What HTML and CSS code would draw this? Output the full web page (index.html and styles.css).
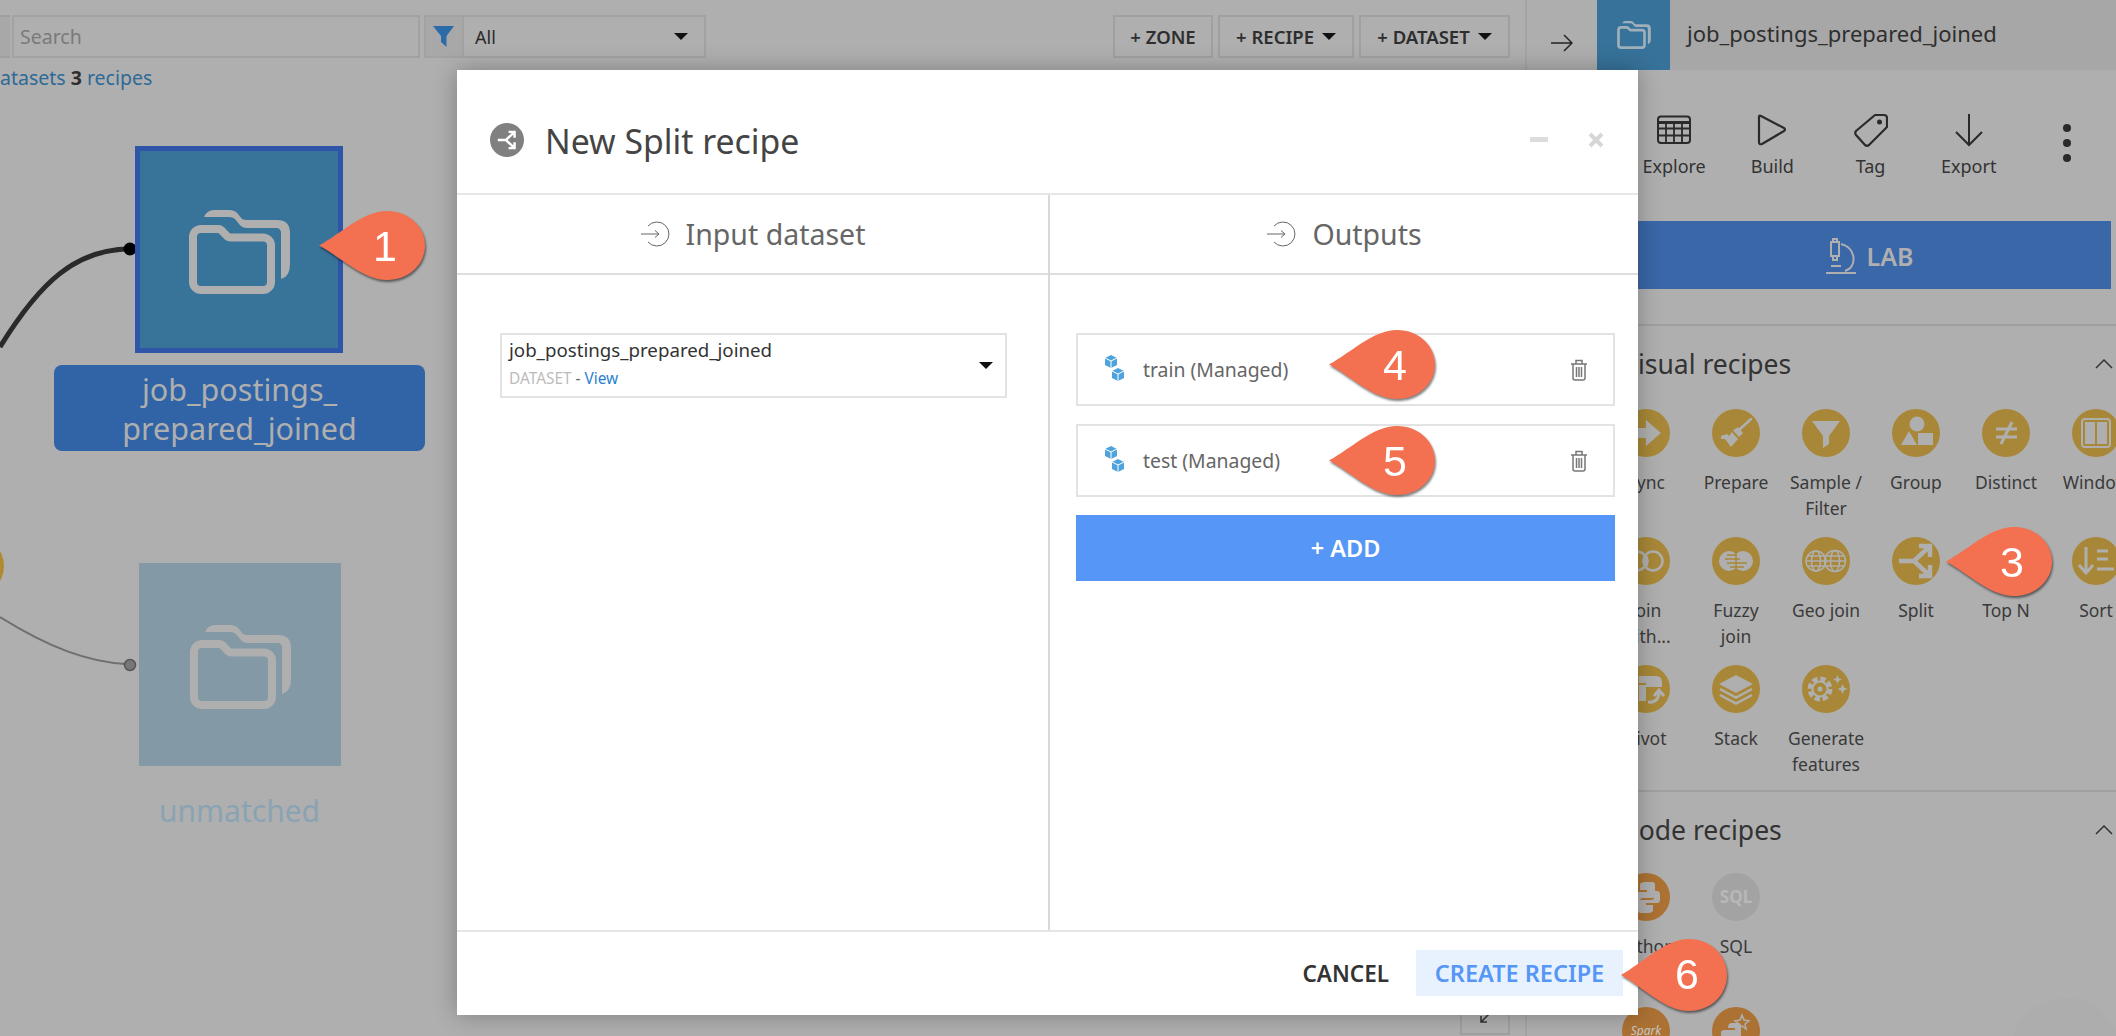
FILE: index.html
```html
<!DOCTYPE html>
<html lang="en">
<head>
<meta charset="UTF-8">
<title>New Split recipe</title>
<link rel="stylesheet" href="styles.css">
</head>
<body>
  <svg class="defs" width="0" height="0">
    <symbol id="folder" viewBox="0 0 101 84">
      <path fill="currentColor" d="M15 7 q3 -7 10 -7 H40 q6 0 9 4 l4 5 q2 1 5 1 H88 q13 0 13 13 V54 q0 13 -9 15 V23 q0 -5 -5 -5 H58 q-5 0 -8 -4 l-4 -5 q-2 -2 -6 -2 Z"/>
      <path fill="none" stroke="currentColor" stroke-width="8" d="M4 27 a8 8 0 0 1 8 -8 H29 q3 0 5 3 l3 3 q2 2.500 5 2.500 H74 a8 8 0 0 1 8 8 V72 a8 8 0 0 1 -8 8 H12 a8 8 0 0 1 -8 -8 Z"/>
    </symbol>
    <symbol id="split" viewBox="0 0 48 48">
      <path fill="none" stroke="currentColor" stroke-width="4.500" d="M7 24 H22 L37 10 M22 24 L37 38 M27 9 H38 V20 M27 39 H38 V28"/>
    </symbol>
    <symbol id="entry" viewBox="0 0 30 28">
      <path fill="none" stroke="currentColor" stroke-width="1" d="M1 14 H19 M15 10.500 L19 14 L15 17.500 M8 6 A12 12 0 1 1 8 22"/>
    </symbol>
    <symbol id="cubes" viewBox="0 0 20 26">
      <path fill="#4ea3dc" d="M1 3 L7 0 L13 3 V10 L7 13 L1 10 Z M8 16 L14 13 L20 16 V23 L14 26 L8 23 Z"/>
      <path fill="none" stroke="#fff" stroke-width="1" d="M1 3 L7 6 L13 3 M7 6 V13 M8 16 L14 19 L20 16 M14 19 V26"/>
    </symbol>
    <symbol id="trash" viewBox="0 0 16 22">
      <path fill="none" stroke="#777" stroke-width="1.500" d="M0 5 H16 M5 5 V1.500 H11 V5 M2 5 V19 q0 2 2 2 H12 q2 0 2 -2 V5 M5.500 8 V18 M8 8 V18 M10.500 8 V18"/>
    </symbol>
    <symbol id="callout" viewBox="0 0 106 70" preserveAspectRatio="none">
      <path fill="#f37150" d="M0 35 C22 23 44 0 68 0 C90 0 106 16 106 35 C106 54 90 70 68 70 C44 70 22 47 0 35 Z"/>
    </symbol>
    <symbol id="chevron" viewBox="0 0 18 10">
      <path fill="none" stroke="#333" stroke-width="1.500" d="M1 9 L9 1 L17 9"/>
    </symbol>
  </svg>

  <div class="page">
    <main class="flow">
      <div class="toolbar">
        <div class="toolbar-stub"></div>
        <div class="search">Search</div>
        <div class="filter-btn">
          <svg width="22" height="21" viewBox="0 0 22 21"><path fill="#2b6ca8" d="M0 0 H21 L13.500 10 V21 L8 16 V10 Z"/></svg>
        </div>
        <div class="filter-select"><span>All</span><i class="caret"></i></div>
        <div class="toolbar-actions">
          <div class="tool-btn tool-zone">+ ZONE</div>
          <div class="tool-btn tool-recipe">+ RECIPE <i class="caret"></i></div>
          <div class="tool-btn tool-dataset">+ DATASET <i class="caret"></i></div>
        </div>
      </div>
      <div class="stats"><a>atasets</a> <b>3</b> <a>recipes</a></div>

      <svg class="links" width="460" height="800" viewBox="0 0 460 800">
        <path fill="none" stroke="#2a2a2a" stroke-width="5" d="M0 347 C40 282 76 249 130 249"/>
        <circle cx="130" cy="249" r="6.500" fill="#000"/>
        <circle cx="-26" cy="566" r="30" fill="#b08a30"/>
        <path fill="none" stroke="#6f6f6f" stroke-width="2" d="M0 617 C50 648 88 662 126 664"/>
        <circle cx="130" cy="665" r="5.500" fill="#777" stroke="#555" stroke-width="1.500"/>
      </svg>
      <div class="node node-selected">
        <svg class="folder"><use href="#folder"/></svg>
      </div>
      <div class="node-label label-selected">job_postings_<br>prepared_joined</div>
      <div class="node node-faded">
        <svg class="folder"><use href="#folder"/></svg>
      </div>
      <div class="node-label label-faded">unmatched</div>
      <div class="zoom-btn">
        <svg width="12" height="12" viewBox="0 0 12 12"><path fill="none" stroke="#333" stroke-width="1.500" d="M11 1 L2 10 M2 4 V10 H8"/></svg>
      </div>
    </main>

    <aside class="panel">
      <header class="panel-head">
        <div class="panel-back">
          <svg width="22" height="18" viewBox="0 0 22 18"><path fill="none" stroke="#222" stroke-width="1.500" d="M0 9 H21 M13 1 L21 9 L13 17"/></svg>
        </div>
        <div class="panel-type"><svg class="folder-small"><use href="#folder"/></svg></div>
        <div class="panel-title">job_postings_prepared_joined</div>
      </header>

      <div class="actions">
        <div class="action">
          <svg width="34" height="30" viewBox="0 0 34 30"><path fill="none" stroke="#2a2a2a" stroke-width="2" d="M4 1.500 H30 q3 0 3 3 V25 q0 3 -3 3 H4 q-3 0 -3 -3 V4.500 q0 -3 3 -3 Z"/><path fill="none" stroke="#2a2a2a" stroke-width="3" d="M1 7.500 H33"/><path fill="none" stroke="#2a2a2a" stroke-width="1.800" d="M1 13.500 H33 M1 20.500 H33 M9 7 V28 M17 7 V28 M25 7 V28"/></svg>
          <span>Explore</span>
        </div>
        <div class="action">
          <svg width="30" height="32" viewBox="0 0 30 32"><path fill="none" stroke="#2a2a2a" stroke-width="2.200" stroke-linejoin="round" d="M2 3 q0 -2 2 -1 L27 14 q2 1.500 0 3 L5 30 q-3 1 -3 -2 Z"/></svg>
          <span>Build</span>
        </div>
        <div class="action">
          <svg width="34" height="34" viewBox="0 0 34 34"><path fill="none" stroke="#2a2a2a" stroke-width="2.200" stroke-linejoin="round" d="M21 2 H30 q3 0 3 3 V14 L15 32 q-2 1.500 -4 0 L2 22 q-1.500 -2 0 -4 Z"/><circle cx="25.500" cy="9" r="2.500" fill="#2a2a2a"/></svg>
          <span>Tag</span>
        </div>
        <div class="action">
          <svg width="28" height="32" viewBox="0 0 28 32"><path fill="none" stroke="#2a2a2a" stroke-width="2" d="M14 0 V31 M1 18 L14 31 L27 18"/></svg>
          <span>Export</span>
        </div>
        <div class="action-more"><i></i><i></i><i></i></div>
      </div>

      <div class="lab-btn">
        <svg width="32" height="36" viewBox="0 0 32 36"><path fill="none" stroke="#afafaf" stroke-width="2" d="M6 4 H14 V18 H6 Z M8 4 V1 H12 V4 M8 18 V22 H12 V18 M16 6 C32 10 32 30 20 33 M1 35 H31 M6 28 H16"/></svg>
        <span>LAB</span>
      </div>

      <section class="recipes recipes-visual">
        <div class="recipes-head"><h2>Visual recipes</h2><svg class="chev"><use href="#chevron"/></svg></div>
        <div class="recipe-grid">
          <div class="recipe">
            <svg class="recipe-icon" viewBox="0 0 48 48"><path fill="#afafaf" d="M8 19 H24 V11 L39 24 L24 37 V29 H8 Z"/></svg>
            <span>Sync</span>
          </div>
          <div class="recipe">
            <svg class="recipe-icon" viewBox="0 0 48 48"><path fill="none" stroke="#afafaf" stroke-width="2.500" stroke-linecap="round" d="M39 10 L27 21"/><path fill="#afafaf" d="M21 21.500 L26 18 L31 24 L27 28 Z"/><path fill="#afafaf" d="M9 27 L15 25 L17 27 L20 23 L26 30 L19 38 L13 30 L9 30 Z"/></svg>
            <span>Prepare</span>
          </div>
          <div class="recipe">
            <svg class="recipe-icon" viewBox="0 0 48 48"><path fill="#afafaf" d="M10 12 H38 L27 27 V35 L21 39 V27 Z"/></svg>
            <span>Sample /<br>Filter</span>
          </div>
          <div class="recipe">
            <svg class="recipe-icon" viewBox="0 0 48 48"><circle cx="25" cy="15" r="7.500" fill="#afafaf"/><path fill="#afafaf" d="M9 36 L17 22 L25 36 Z"/><rect x="26" y="24" width="15" height="12" fill="#afafaf"/></svg>
            <span>Group</span>
          </div>
          <div class="recipe">
            <svg class="recipe-icon" viewBox="0 0 48 48"><path fill="none" stroke="#afafaf" stroke-width="3" d="M14 20 H35 M14 28 H35 M30 13 L19 35"/></svg>
            <span>Distinct</span>
          </div>
          <div class="recipe">
            <svg class="recipe-icon" viewBox="0 0 48 48"><rect x="10" y="10" width="28" height="28" rx="3" fill="none" stroke="#afafaf" stroke-width="2"/><path fill="#afafaf" d="M13 13 H23 V35 H13 Z M25 13 H35 V35 H25 Z"/></svg>
            <span>Window</span>
          </div>
          <div class="recipe">
            <svg class="recipe-icon" viewBox="0 0 48 48"><circle cx="15" cy="24" r="9.500" fill="none" stroke="#afafaf" stroke-width="2.500"/><circle cx="31" cy="24" r="9.500" fill="none" stroke="#afafaf" stroke-width="2.500"/><path fill="#afafaf" d="M24 17 A10 10 0 0 1 24 31 A11 11 0 0 1 24 17 Z"/></svg>
            <span>Join<br>with...</span>
          </div>
          <div class="recipe">
            <svg class="recipe-icon" viewBox="0 0 48 48"><circle cx="17" cy="24" r="10" fill="#afafaf"/><circle cx="31" cy="24" r="10" fill="#afafaf"/><path fill="none" stroke="#a88838" stroke-width="1.500" d="M15 18 H24 M13 22 H28 M15 26 H35 M18 30 H32 M24 14 V34"/></svg>
            <span>Fuzzy<br>join</span>
          </div>
          <div class="recipe">
            <svg class="recipe-icon" viewBox="0 0 48 48"><g fill="none" stroke="#afafaf" stroke-width="1.500"><circle cx="14" cy="24" r="10"/><ellipse cx="14" cy="24" rx="4.500" ry="10"/><path d="M4 24 H24 M5.500 19 H22.500 M5.500 29 H22.500"/></g><g fill="none" stroke="#afafaf" stroke-width="1.500"><circle cx="33" cy="24" r="10.500"/><ellipse cx="33" cy="24" rx="4.500" ry="10.500"/><path d="M22.500 24 H43.500 M24 19 H42 M24 29 H42"/></g></svg>
            <span>Geo join</span>
          </div>
          <div class="recipe">
            <svg class="recipe-icon icon-split"><use href="#split"/></svg>
            <span>Split</span>
          </div>
          <div class="recipe">
            <svg class="recipe-icon" viewBox="0 0 48 48"></svg>
            <span>Top N</span>
          </div>
          <div class="recipe">
            <svg class="recipe-icon" viewBox="0 0 48 48"><path fill="none" stroke="#afafaf" stroke-width="3" d="M14 10 V35 M7 28 L14 36 L21 28 M25 14 H36 M25 22 H36 M25 32 H42"/></svg>
            <span>Sort</span>
          </div>
          <div class="recipe">
            <svg class="recipe-icon" viewBox="0 0 48 48"><path fill="#afafaf" d="M8 11 H34 q6 0 6 6 V22 H24 V36 H8 Z"/><path fill="none" stroke="#a88838" stroke-width="2" d="M8 19 H24 M16 11 V36"/><path fill="none" stroke="#afafaf" stroke-width="3" d="M26 37 C34 38 37 33 37 27 M32 31 L37 25 L42 31"/></svg>
            <span>Pivot</span>
          </div>
          <div class="recipe">
            <svg class="recipe-icon" viewBox="0 0 48 48"><path fill="#afafaf" d="M24 10 L41 19 L24 28 L7 19 Z"/><path fill="none" stroke="#afafaf" stroke-width="2.500" d="M8 24 L24 32.500 L40 24 M8 30 L24 38.500 L40 30"/></svg>
            <span>Stack</span>
          </div>
          <div class="recipe">
            <svg class="recipe-icon" viewBox="0 0 48 48"><circle cx="18" cy="24" r="10" fill="none" stroke="#afafaf" stroke-width="5" stroke-dasharray="5.200 2.650"/><circle cx="18" cy="24" r="7.500" fill="none" stroke="#afafaf" stroke-width="2"/><circle cx="18" cy="24" r="2.500" fill="#afafaf"/><path fill="#afafaf" d="M35.500 10 l1.300 3.200 3.200 1.300 -3.200 1.300 -1.300 3.200 -1.300 -3.200 -3.200 -1.300 3.200 -1.300 Z M40.500 19 l1.500 3.500 3.500 1.500 -3.500 1.500 -1.500 3.500 -1.500 -3.500 -3.500 -1.500 3.500 -1.500 Z"/></svg>
            <span>Generate<br>features</span>
          </div>
        </div>
      </section>

      <section class="recipes recipes-code">
        <div class="recipes-head"><h2>Code recipes</h2><svg class="chev"><use href="#chevron"/></svg></div>
        <div class="recipe-grid">
          <div class="recipe">
            <svg class="recipe-icon code-icon" viewBox="0 0 48 48"><path fill="#afafaf" d="M23 9 H30 q3 0 3 3 V22 q0 3 -3 3 H21 q-3 0 -3 3 V31 H14 q-3 0 -3 -4 V22 q0 -3 3 -3 H25 V17 H18 V12 q0 -3 5 -3 Z M35 18 q3 0 3 4 V27 q0 3 -3 3 H24 V32 H31 V37 q0 3 -5 3 H19 q-3 0 -3 -3 V30 q0 -3 3 -3 H29 q3 0 3 -3 V18 Z"/></svg>
            <span>Python</span>
          </div>
          <div class="recipe">
            <div class="recipe-icon sql-icon">SQL</div>
            <span>SQL</span>
          </div>
          <div class="recipe">
            <div class="recipe-icon spark-icon">Spark</div>
          </div>
          <div class="recipe">
            <svg class="recipe-icon code-icon" viewBox="0 0 48 48"><path fill="none" stroke="#afafaf" stroke-width="1.500" d="M30 8 l2 5 5 1 -4 3 1 5 -4 -3 -4 3 1 -5 -4 -3 5 -1 Z"/><path fill="#afafaf" d="M20 16 H26 q3 0 3 3 V28 q0 3 -3 3 H18 q-3 0 -3 3 H12 q-3 0 -3 -4 V26 q0 -3 3 -3 H23 V21 H16 q0 -5 4 -5 Z"/></svg>
          </div>
        </div>
      </section>
      <div class="help-bubble"></div>
    </aside>
  </div>

  <div class="dialog">
    <header class="dialog-head">
      <div class="dialog-icon"><svg class="dialog-split"><use href="#split"/></svg></div>
      <h1>New Split recipe</h1>
      <div class="dialog-tools">
        <i class="minimize"></i>
        <svg width="16" height="16" viewBox="0 0 16 16"><path fill="none" stroke="#d6d6d6" stroke-width="4" d="M2 2 L14 14 M14 2 L2 14"/></svg>
      </div>
    </header>
    <div class="dialog-body">
      <div class="col col-input">
        <div class="col-head"><svg class="entry"><use href="#entry"/></svg><span>Input dataset</span></div>
        <div class="col-main">
          <div class="dataset-select">
            <div>
              <div class="dataset-name">job_postings_prepared_joined</div>
              <div class="dataset-meta"><span class="meta-type">DATASET</span> - <a>View</a></div>
            </div>
            <i class="caret"></i>
          </div>
        </div>
      </div>
      <div class="col col-output">
        <div class="col-head"><svg class="entry"><use href="#entry"/></svg><span>Outputs</span></div>
        <div class="col-main col-main-output">
          <div class="output-row">
            <svg class="cubes"><use href="#cubes"/></svg>
            <span class="output-name">train (Managed)</span>
            <svg class="trash"><use href="#trash"/></svg>
          </div>
          <div class="output-row">
            <svg class="cubes"><use href="#cubes"/></svg>
            <span class="output-name">test (Managed)</span>
            <svg class="trash"><use href="#trash"/></svg>
          </div>
          <div class="add-btn">+ ADD</div>
        </div>
      </div>
    </div>
    <footer class="dialog-foot">
      <div class="btn-cancel">CANCEL</div>
      <div class="btn-create">CREATE RECIPE</div>
    </footer>
  </div>

  <div class="callout callout-1"><svg><use href="#callout"/></svg><span>1</span></div>
  <div class="callout callout-3"><svg><use href="#callout"/></svg><span>3</span></div>
  <div class="callout callout-4"><svg><use href="#callout"/></svg><span>4</span></div>
  <div class="callout callout-5"><svg><use href="#callout"/></svg><span>5</span></div>
  <div class="callout callout-6"><svg><use href="#callout"/></svg><span>6</span></div>
</body>
</html>
```

FILE: styles.css
```css
html, body {
  margin: 0;
  height: 100%;
  overflow: hidden;
}
body {
  position: relative;
  width: 2116px;
  height: 1036px;
  background: #afafaf;
  font-family: "Noto Sans", sans-serif;
  color: #333;
}
.defs {
  position: absolute;
}
.page {
  display: flex;
  height: 100%;
}

/* flow area */
.flow {
  position: relative;
  width: 1527px;
  flex-shrink: 0;
  box-sizing: border-box;
  padding-right: 17px;
}
.toolbar {
  display: flex;
  padding-top: 15px;
  height: 43px;
}
.toolbar-stub {
  width: 10px;
  height: 43px;
  background: #a8a8a8;
  border-top: 2px solid #a0a0a0;
  border-bottom: 2px solid #a0a0a0;
  box-sizing: border-box;
}
.search {
  width: 408px;
  margin-left: 2px;
  box-sizing: border-box;
  border: 2px solid #a2a2a2;
  padding-left: 6px;
  font-size: 19.500px;
  line-height: 39px;
  color: #7a7a7a;
}
.filter-btn {
  width: 40px;
  margin-left: 4px;
  box-sizing: border-box;
  border: 2px solid #a2a2a2;
  background: #a8a8a8;
  display: flex;
  align-items: center;
  justify-content: center;
}
.filter-select {
  width: 242px;
  box-sizing: border-box;
  border: 2px solid #a2a2a2;
  border-left: 0;
  padding: 0 16px 0 11px;
  display: flex;
  align-items: center;
  justify-content: space-between;
  font-size: 18px;
  color: #2a2a2a;
}
.caret {
  display: inline-block;
  width: 0;
  height: 0;
  border-left: 7px solid transparent;
  border-right: 7px solid transparent;
  border-top: 7px solid #111;
}
.toolbar-actions {
  display: flex;
  gap: 5px;
  margin-left: auto;
}
.tool-btn {
  box-sizing: border-box;
  border: 2px solid #a0a0a0;
  display: flex;
  align-items: center;
  justify-content: center;
  gap: 8px;
  font-size: 18.500px;
  font-weight: 600;
  color: #2e2e2e;
}
.tool-zone { width: 100px; }
.tool-recipe { width: 136px; }
.tool-dataset { width: 151px; }
.stats {
  margin-top: 7px;
  font-size: 19.500px;
  line-height: 26px;
  color: #2d6a96;
}
.stats b {
  color: #2e2e2e;
}
.links {
  position: absolute;
  left: 0;
  top: 0;
}
.node {
  position: absolute;
  box-sizing: border-box;
  display: flex;
  align-items: center;
  justify-content: center;
}
.node-selected {
  left: 135px;
  top: 146px;
  width: 208px;
  height: 207px;
  background: #387399;
  border: 5px solid #2f55a8;
}
.node-faded {
  left: 139px;
  top: 563px;
  width: 202px;
  height: 203px;
  background: #8399a5;
}
.folder {
  width: 101px;
  height: 84px;
  margin-top: 5px;
  color: #afafaf;
}
.node-label {
  position: absolute;
  text-align: center;
  font-size: 30px;
  line-height: 39px;
}
.label-selected {
  left: 54px;
  top: 365px;
  width: 371px;
  height: 86px;
  box-sizing: border-box;
  padding-top: 5px;
  background: #3164a6;
  border-radius: 8px;
  font-size: 30.500px;
  color: #afafaf;
}
.label-faded {
  left: 54px;
  top: 791px;
  width: 371px;
  color: #8aa3b3;
}
.zoom-btn {
  position: absolute;
  left: 1460px;
  top: 990px;
  width: 50px;
  height: 45px;
  box-sizing: border-box;
  border: 2px solid #a0a0a0;
  padding-top: 20px;
  display: flex;
  justify-content: center;
}

/* right panel */
.panel {
  position: relative;
  flex: 1;
  min-width: 0;
  overflow: hidden;
  border-left: 2px solid #a5a5a5;
  margin-left: -2px;
}
.panel-head {
  display: flex;
  height: 70px;
  background: #a7a7a7;
}
.panel-back {
  width: 70px;
  background: #aeaeae;
  display: flex;
  justify-content: center;
  padding-top: 34px;
  box-sizing: border-box;
}
.panel-type {
  width: 73px;
  background: #37729a;
  display: flex;
  align-items: center;
  justify-content: center;
}
.folder-small {
  width: 34px;
  height: 28px;
  color: #9fb0bb;
}
.panel-title {
  margin-left: 17px;
  font-size: 22px;
  line-height: 66px;
  color: #2e2e2e;
}
.actions {
  display: flex;
  height: 151px;
  box-sizing: border-box;
  padding: 42px 0 0 98px;
}
.action {
  width: 98.400px;
  display: flex;
  flex-direction: column;
  align-items: center;
  font-size: 18px;
  color: #333;
}
.action svg {
  height: 36px;
}
.action span {
  margin-top: 5px;
  line-height: 26px;
}
.action-more {
  width: 98.400px;
  display: flex;
  flex-direction: column;
  align-items: center;
  gap: 7px;
  padding-top: 12px;
}
.action-more i {
  width: 8px;
  height: 8px;
  border-radius: 50%;
  background: #2a2a2a;
}
.lab-btn {
  width: 584px;
  height: 68px;
  background: #3a67a8;
  display: flex;
  align-items: center;
  justify-content: center;
  gap: 10px;
  padding: 2px 0 0 100px;
  box-sizing: border-box;
  font-size: 25px;
  font-weight: 600;
  color: #afafaf;
}
.recipes {
  border-top: 2px solid #a0a0a0;
  padding-left: 74px;
  box-sizing: border-box;
}
.recipes-visual {
  margin-top: 35px;
  height: 466px;
}
.recipes-head {
  display: flex;
  align-items: center;
  justify-content: space-between;
  height: 32px;
  padding: 0 3px 0 21px;
  margin-top: 22px;
}
.recipes-head h2 {
  margin: 0;
  font-size: 26.500px;
  font-weight: 400;
  color: #333;
}
.chev {
  width: 18px;
  height: 10px;
}
.recipe-grid {
  display: grid;
  grid-template-columns: repeat(6, 90px);
  grid-auto-rows: 128px;
  margin-top: 29px;
  width: 540px;
}
.recipes-code .recipe-grid {
  grid-template-columns: repeat(2, 90px);
  grid-auto-rows: 134px;
  margin-top: 27px;
}
.recipe {
  display: flex;
  flex-direction: column;
  align-items: center;
  text-align: center;
  font-size: 17.500px;
  line-height: 25.500px;
  color: #3a3a3a;
}
.recipe span {
  margin-top: 13px;
  white-space: nowrap;
}
.recipe-icon {
  width: 48px;
  height: 48px;
  border-radius: 50%;
  background: #a88838;
  flex-shrink: 0;
}
.icon-split {
  color: #afafaf;
}
.code-icon {
  background: #ac7233;
}
.sql-icon {
  background: #a3a3a3;
  color: #b8b8b8;
  font-size: 17px;
  font-weight: 700;
  line-height: 48px;
}
.spark-icon {
  background: #ac7233;
  color: #c8c8c8;
  font-size: 12px;
  font-style: italic;
  line-height: 48px;
}
.help-bubble {
  position: absolute;
  left: 484px;
  top: 998px;
  width: 110px;
  height: 110px;
  border-radius: 50%;
  background: #adadad;
}

/* dialog */
.dialog {
  position: absolute;
  left: 457px;
  top: 70px;
  width: 1181px;
  height: 945px;
  background: #fff;
  box-shadow: 0 0 22px rgba(0, 0, 0, 0.28);
  display: flex;
  flex-direction: column;
}
.dialog-head {
  display: flex;
  align-items: center;
  height: 125px;
  box-sizing: border-box;
  padding: 16px 31px 0 33px;
  border-bottom: 2px solid #e6e6e6;
}
.dialog-icon {
  width: 34px;
  height: 34px;
  border-radius: 50%;
  background: #808080;
  color: #fff;
  display: flex;
  align-items: center;
  justify-content: center;
}
.dialog-split {
  width: 26px;
  height: 26px;
}
.dialog-head h1 {
  margin: 2px 0 0 21px;
  font-size: 33.800px;
  font-weight: 400;
  color: #444;
}
.dialog-tools {
  display: flex;
  align-items: center;
  gap: 40px;
  margin: 0 3px 0 auto;
}
.minimize {
  width: 18px;
  height: 5px;
  background: #dcdcdc;
}
.dialog-body {
  flex: 1;
  display: flex;
  min-height: 0;
}
.col-input {
  width: 591px;
  border-right: 2px solid #d8d8d8;
}
.col-output {
  flex: 1;
}
.col-head {
  height: 78px;
  border-bottom: 2px solid #dedede;
  display: flex;
  align-items: center;
  justify-content: center;
  gap: 16px;
  font-size: 28.500px;
  color: #666;
}
.entry {
  width: 30px;
  height: 28px;
  color: #666;
}
.col-main {
  padding: 58px 41px 0 43px;
}
.col-main-output {
  padding: 58px 23px 0 26px;
}
.dataset-select {
  height: 65px;
  box-sizing: border-box;
  border: 2px solid #e3e3e3;
  padding: 0 12px 0 7px;
  display: flex;
  align-items: center;
  justify-content: space-between;
}
.dataset-name {
  font-size: 18.700px;
  line-height: 26px;
  margin-top: -4px;
  color: #333;
}
.dataset-meta {
  font-size: 15.400px;
  line-height: 22px;
  margin-top: 5px;
  color: #666;
}
.meta-type {
  color: #bbb;
}
.dataset-meta a {
  color: #2a7fd0;
}
.output-row {
  height: 73px;
  box-sizing: border-box;
  border: 2px solid #e3e3e3;
  margin-bottom: 18px;
  padding: 0 26px 0 26px;
  display: flex;
  align-items: center;
}
.cubes {
  width: 20px;
  height: 26px;
  margin-top: -4px;
}
.output-name {
  margin-left: 19px;
  font-size: 19.400px;
  color: #666;
}
.trash {
  width: 16px;
  height: 22px;
  margin-left: auto;
}
.add-btn {
  height: 66px;
  background: #5596f6;
  color: #fff;
  font-size: 23.500px;
  font-weight: 600;
  display: flex;
  align-items: center;
  justify-content: center;
}
.dialog-foot {
  height: 85px;
  box-sizing: border-box;
  border-top: 2px solid #e6e6e6;
  padding: 18px 15px 0 0;
  display: flex;
  justify-content: flex-end;
}
.btn-cancel, .btn-create {
  height: 46px;
  display: flex;
  align-items: center;
  justify-content: center;
  font-size: 22.500px;
  font-weight: 600;
}
.btn-cancel {
  margin-right: 27px;
  color: #333;
}
.btn-create {
  width: 207px;
  background: #e8f2fe;
  color: #5596f6;
  font-size: 23.500px;
}

/* numbered callouts */
.callout {
  position: absolute;
  width: 106px;
  height: 69px;
  filter: drop-shadow(1px 2px 1px rgba(0, 0, 0, 0.5));
}
.callout svg {
  position: absolute;
  left: 0;
  top: 0;
  width: 100%;
  height: 100%;
}
.callout span {
  position: absolute;
  left: 44px;
  width: 44px;
  top: 1px;
  text-align: center;
  font-family: "Liberation Sans", sans-serif;
  font-size: 43px;
  line-height: 69px;
  color: #fff;
}
.callout-1 { left: 319px; top: 211px; }
.callout-3 { left: 1946px; top: 527px; }
.callout-4 { left: 1329px; top: 330px; }
.callout-5 { left: 1329px; top: 426px; }
.callout-6 { left: 1621px; top: 939px; height: 72px; }
```
